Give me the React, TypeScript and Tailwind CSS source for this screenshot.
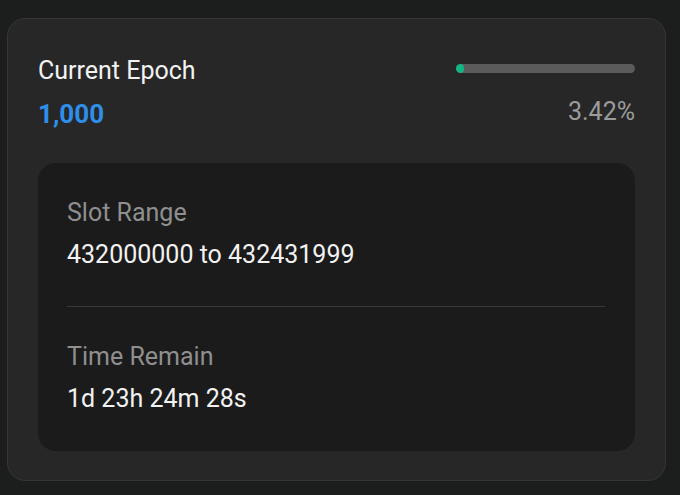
export default function App() {
  const progress = 3.42;
  return (
    <div className="min-h-screen bg-[#1c1d1d] pt-[18px] pl-[7px]" style={{ fontFamily: "Roboto, 'Noto Sans', sans-serif" }}>
      <div className="w-[659px] h-[463px] rounded-[18px] border border-[#353535] bg-[#272727] px-[30px] pt-[37px]">
        <div className="flex justify-between">
          <div>
            <div className="text-[25px] leading-[30px] text-[#f2f2f2]">Current Epoch</div>
            <div className="mt-[13px] text-[26px] leading-[30px] font-bold text-[#2d8fea]">1,000</div>
          </div>
          <div className="flex flex-col items-end w-[179px]">
            <div className="mt-[8px] h-[9px] w-full rounded-full bg-[#5b5b5b] overflow-hidden">
              <div className="h-full rounded-full bg-[#12b584]" style={{ width: `${progress}%`, minWidth: 8 }} />
            </div>
            <div className="mt-[24px] text-[25px] leading-[30px] text-[#9b9b9b]">3.42%</div>
          </div>
        </div>
        <div className="mt-[34px] h-[288px] rounded-[18px] bg-[#1b1b1b] px-[29px] pt-[35px]">
          <div className="text-[25px] leading-[30px] text-[#8f8f8f]">Slot Range</div>
          <div className="mt-[12px] text-[25px] leading-[30px] text-[#f2f2f2]">432000000 to 432431999</div>
          <div className="mt-[36px] h-px bg-[#383838] mr-[1px]" />
          <div className="mt-[35px] text-[25px] leading-[30px] text-[#8f8f8f]">Time Remain</div>
          <div className="mt-[12px] text-[25px] leading-[30px] text-[#f2f2f2]">1d 23h 24m 28s</div>
        </div>
      </div>
    </div>
  );
}
